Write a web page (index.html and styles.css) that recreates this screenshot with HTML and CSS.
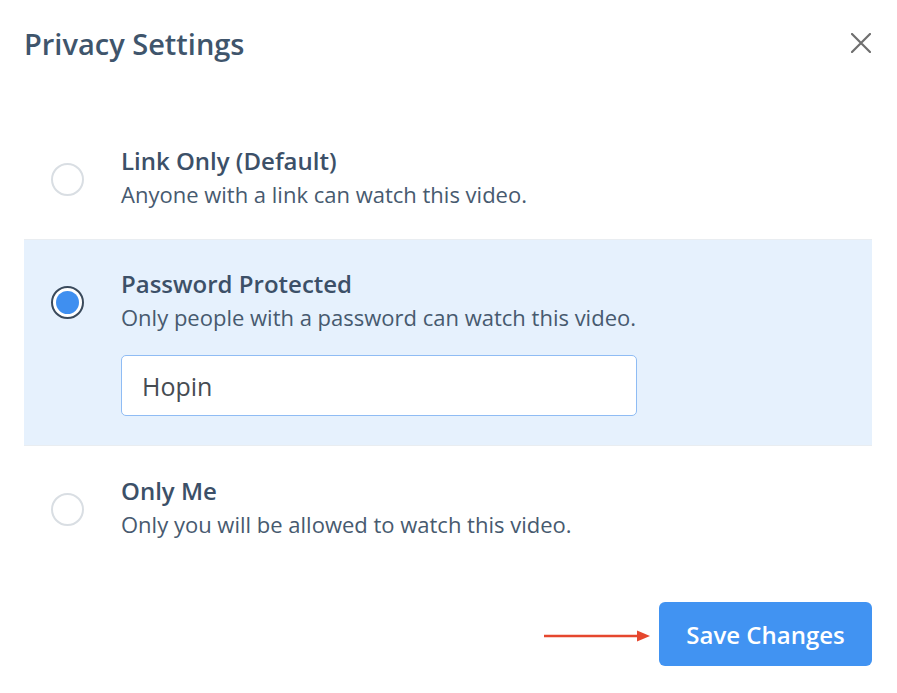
FILE: index.html
```html
<!DOCTYPE html>
<html>
  <head>
    <title>Privacy Settings</title>
    <link rel="stylesheet" href="styles.css">
  </head>
  <body>
    <div class="modal">
      <div class="modal-header">
        <h1>Privacy Settings</h1>
        <button class="close-button" aria-label="Close">
          <svg width="20" height="20" viewBox="0 0 20 20">
            <path d="M1 1 L19 19 M19 1 L1 19" stroke="#6f6f6f" stroke-width="2.2" stroke-linecap="round" />
          </svg>
        </button>
      </div>

      <div class="options">
        <div class="option">
          <div class="option-main">
            <span class="radio"></span>
            <div class="option-text">
              <div class="option-title">Link Only (Default)</div>
              <div class="option-desc">Anyone with a link can watch this video.</div>
            </div>
          </div>
        </div>

        <div class="option selected">
          <div class="option-main">
            <span class="radio checked"></span>
            <div class="option-text">
              <div class="option-title">Password Protected</div>
              <div class="option-desc">Only people with a password can watch this video.</div>
            </div>
          </div>
          <input class="password-input" type="text" value="Hopin" />
        </div>

        <div class="option">
          <div class="option-main">
            <span class="radio"></span>
            <div class="option-text">
              <div class="option-title">Only Me</div>
              <div class="option-desc">Only you will be allowed to watch this video.</div>
            </div>
          </div>
        </div>
      </div>

      <div class="modal-footer">
        <svg class="arrow" width="108" height="14" viewBox="0 0 108 14">
          <path d="M1 7 H96" stroke="#e5472e" stroke-width="2.4" />
          <path d="M94 1.5 L107 7 L94 12.5 Z" fill="#e5472e" />
        </svg>
        <button class="save-button">Save Changes</button>
      </div>
    </div>
  </body>
</html>
```

FILE: styles.css
```css
body {
  margin: 0;
  background-color: #fff;
  font-family: "Open Sans", Arial, sans-serif;
  color: #3c5068;
}

.modal {
  padding: 0 25px 0 24px;
}

.modal-header {
  display: flex;
  justify-content: space-between;
  align-items: center;
  padding-top: 24px;
}

.modal-header h1 {
  margin: 0;
  font-size: 29px;
  line-height: 40px;
  font-weight: 600;
  color: #3f556c;
}

.close-button {
  background: none;
  border: none;
  padding: 0;
  margin-right: 1px;
  margin-top: -2px;
  width: 20px;
  height: 20px;
  cursor: pointer;
}

.close-button svg {
  display: block;
}

.options {
  margin-top: 52px;
}

.option {
  padding: 30px 27px;
}

.option.selected {
  background-color: #e6f1fd;
  border-top: 1px solid #e9edf1;
  border-bottom: 1px solid #e9edf1;
  padding-top: 29px;
  padding-bottom: 29px;
}

.option-main {
  display: flex;
  align-items: center;
}

.radio {
  flex: none;
  box-sizing: border-box;
  width: 33px;
  height: 33px;
  margin-top: 4px;
  margin-right: 37px;
  border: 2px solid #d9dee3;
  border-radius: 50%;
  background-color: #fff;
}

.radio.checked {
  border-color: #3a4a5c;
  padding: 3px;
}

.radio.checked::after {
  content: "";
  display: block;
  width: 23px;
  height: 23px;
  border-radius: 50%;
  background-color: #3f8ff0;
}

.option-title {
  font-size: 24px;
  line-height: 30px;
  font-weight: 600;
  color: #3c5068;
  margin-bottom: 3px;
}

.option-desc {
  font-size: 22px;
  line-height: 30px;
  color: #475a6f;
}

.password-input {
  display: block;
  box-sizing: border-box;
  width: 516px;
  height: 61px;
  margin: 23px 0 0 70px;
  padding: 0 20px;
  border: 1px solid #8fbcf4;
  border-radius: 5px;
  background-color: #fff;
  font-family: "Open Sans", Arial, sans-serif;
  font-size: 25px;
  color: #464c52;
  outline: none;
}

.modal-footer {
  display: flex;
  justify-content: flex-end;
  align-items: center;
  margin-top: 33px;
}

.arrow {
  display: block;
  margin-right: 8px;
  margin-top: 4px;
}

.save-button {
  width: 213px;
  height: 64px;
  border: none;
  border-radius: 6px;
  background-color: #4193f2;
  color: #fff;
  font-family: "Open Sans", Arial, sans-serif;
  font-size: 24px;
  font-weight: 600;
  cursor: pointer;
}
```
